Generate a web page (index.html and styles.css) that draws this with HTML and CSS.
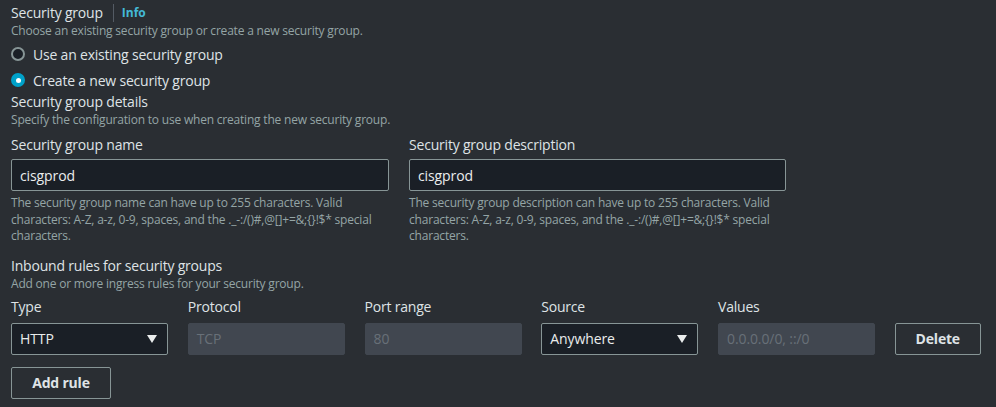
FILE: index.html
```html
<!DOCTYPE html>
<html lang="en">
<head>
<meta charset="utf-8">
<title>Security group</title>
<link rel="stylesheet" href="styles.css">
</head>
<body>
<div class="page">
  <div class="heading-row">
    <span class="heading">Security group</span>
    <span class="divider"></span>
    <a class="info" href="#">Info</a>
  </div>
  <div class="desc">Choose an existing security group or create a new security group.</div>

  <div class="radios">
    <label class="radio"><span class="dot"></span><span>Use an existing security group</span></label>
    <label class="radio"><span class="dot checked"></span><span>Create a new security group</span></label>
  </div>

  <div class="heading sub">Security group details</div>
  <div class="desc">Specify the configuration to use when creating the new security group.</div>

  <div class="fields">
    <div class="field">
      <div class="label">Security group name</div>
      <div class="input">cisgprod</div>
      <div class="help">The security group name can have up to 255 characters. Valid characters: A-Z, a-z, 0-9, spaces, and the ._-:/()#,@[]+=&amp;;{}!$* special characters.</div>
    </div>
    <div class="field">
      <div class="label">Security group description</div>
      <div class="input">cisgprod</div>
      <div class="help">The security group description can have up to 255 characters. Valid characters: A-Z, a-z, 0-9, spaces, and the ._-:/()#,@[]+=&amp;;{}!$* special characters.</div>
    </div>
  </div>

  <div class="heading inbound">Inbound rules for security groups</div>
  <div class="desc">Add one or more ingress rules for your security group.</div>

  <div class="rules">
    <div class="label">Type</div>
    <div class="label">Protocol</div>
    <div class="label">Port range</div>
    <div class="label">Source</div>
    <div class="label">Values</div>
    <div></div>
    <div class="input select"><span>HTTP</span><span class="caret"></span></div>
    <div class="input disabled">TCP</div>
    <div class="input disabled">80</div>
    <div class="input select"><span>Anywhere</span><span class="caret"></span></div>
    <div class="input disabled">0.0.0.0/0, ::/0</div>
    <button class="btn" type="button">Delete</button>
  </div>

  <button class="btn add" type="button">Add rule</button>
</div>
</body>
</html>
```

FILE: styles.css
```css
html, body {
  margin: 0;
  padding: 0;
  background: #2a2e33;
}
body {
  font-family: "Open Sans", "Noto Sans", sans-serif;
  color: #d5dbdb;
}
.page {
  padding: 3px 11px 0 11px;
  display: flex;
  flex-direction: column;
  align-items: flex-start;
}
.heading-row {
  display: flex;
  align-items: center;
  height: 20px;
}
.heading {
  font-size: 14px;
  line-height: 20px;
  letter-spacing: -0.2px;
  color: #dfe3e6;
}
.divider {
  width: 1px;
  height: 18px;
  background: #545b64;
  margin: 0 8px 0 10px;
}
.info {
  font-size: 12px;
  font-weight: 700;
  color: #44b9d6;
  text-decoration: none;
  line-height: 20px;
}
.desc {
  font-size: 12px;
  line-height: 16px;
  letter-spacing: -0.2px;
  color: #95a5a6;
}
.radios {
  display: flex;
  flex-direction: column;
  gap: 6px;
  margin-top: 5px;
}
.radio {
  display: flex;
  align-items: center;
  gap: 8px;
  height: 20px;
  font-size: 14px;
  letter-spacing: -0.2px;
  color: #dfe3e6;
}
.dot {
  width: 14px;
  height: 14px;
  box-sizing: border-box;
  border-radius: 50%;
  border: 2px solid #879596;
  background: #1a1f26;
  display: flex;
  align-items: center;
  justify-content: center;
}
.dot.checked {
  border-color: #00a1c9;
  background: #00a1c9;
}
.dot.checked::after {
  content: "";
  width: 5px;
  height: 5px;
  border-radius: 50%;
  background: #ffffff;
}
.sub {
  margin-top: 2px;
}
.fields {
  display: grid;
  grid-template-columns: 378px 377px;
  column-gap: 20px;
  margin-top: 7px;
}
.field {
  display: flex;
  flex-direction: column;
}
.label {
  font-size: 14px;
  line-height: 20px;
  letter-spacing: -0.2px;
  color: #dfe3e6;
}
.input {
  box-sizing: border-box;
  height: 32px;
  margin-top: 4px;
  border: 1px solid #879596;
  border-radius: 2px;
  background: #1a1f26;
  padding: 0 8px;
  display: flex;
  align-items: center;
  font-size: 14px;
  letter-spacing: -0.1px;
  color: #eaeded;
  white-space: nowrap;
}
.help {
  margin-top: 4px;
  font-size: 12px;
  line-height: 16.5px;
  letter-spacing: -0.2px;
  color: #95a5a6;
}
.inbound {
  margin-top: 11px;
}
.rules {
  display: grid;
  grid-template-columns: repeat(5, 157px) 86px;
  column-gap: 19.75px;
  margin-top: 5px;
  align-items: end;
}
.rules .input {
  margin-top: 6px;
}
.select {
  justify-content: space-between;
  padding-right: 10px;
}
.caret {
  width: 0;
  height: 0;
  border-left: 5px solid transparent;
  border-right: 5px solid transparent;
  border-top: 8px solid #eaeded;
}
.disabled {
  background: #414750;
  border-color: #414750;
  color: #687078;
}
.btn {
  box-sizing: border-box;
  height: 32px;
  border: 1px solid #879596;
  border-radius: 2px;
  background: transparent;
  color: #dfe3e6;
  font-family: inherit;
  font-size: 14px;
  font-weight: 700;
  letter-spacing: -0.2px;
  padding: 0;
  white-space: nowrap;
}
.rules .btn {
  width: 86px;
}
.add {
  margin-top: 12px;
  width: 100px;
}
```
